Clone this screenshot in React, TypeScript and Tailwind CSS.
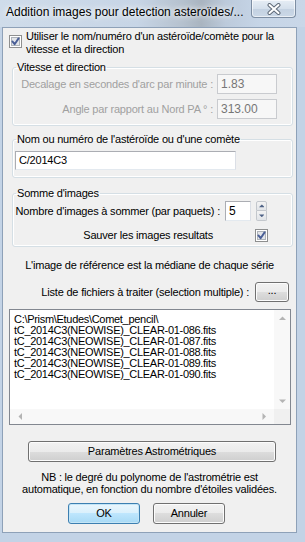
import React from "react";

const F = "font-['Liberation_Sans',Arial,sans-serif]";

function CheckBox() {
  return (
    <svg width="13" height="13" viewBox="0 0 13 13" className="block shrink-0">
      <rect x="0.5" y="0.5" width="12" height="12" fill="#ffffff" stroke="#8e8f8f" />
      <rect x="2.5" y="2.5" width="8" height="8" fill="#e3e5e9" stroke="#aeb3b9" />
      <path d="M3.4 6.4 L5.6 9.2 L9.6 3.4" stroke="#4a5f97" strokeWidth="1.9" fill="none" strokeLinecap="round" strokeLinejoin="round" />
    </svg>
  );
}

function Arrow({ dir, color = "#4d6185", size = 5 }: { dir: "up" | "down" | "left" | "right"; color?: string; size?: number }) {
  const p =
    dir === "up"
      ? "M0 4 L3.5 0.5 L7 4 Z"
      : dir === "down"
      ? "M0 0.5 L3.5 4 L7 0.5 Z"
      : dir === "left"
      ? "M4 0 L0.5 3.5 L4 7 Z"
      : "M0.5 0 L4 3.5 L0.5 7 Z";
  const w = dir === "up" || dir === "down" ? 7 : 4.5;
  const h = dir === "up" || dir === "down" ? 4.5 : 7;
  return (
    <svg width={w * (size / 5)} height={h * (size / 5)} viewBox={`0 0 ${w} ${h}`} className="block">
      <path d={p} fill={color} />
    </svg>
  );
}

const btn =
  "border border-[#707070] rounded-[3px] bg-[linear-gradient(to_bottom,#f2f2f2_0%,#ebebeb_50%,#dddddd_50%,#cfcfcf_100%)] shadow-[inset_0_0_0_1px_#fcfcfc] flex items-center justify-center text-black";

const groupCls = "border border-[#d5dfe5] rounded-[3px] shadow-[inset_0_0_0_1px_#ffffff] min-w-0";

export default function App() {
  return (
    <div className={`${F} w-[305px] h-[542px] flex flex-col bg-[#c3d3e6] overflow-hidden text-[11px] leading-[13px] tracking-[-0.2px] text-black`}>
      {/* Title bar */}
      <div className="h-[27px] flex items-start bg-[linear-gradient(90deg,#cfdcea_0%,#c7d5e6_45%,#b5c1ce_60%,#a9b4c0_66%,#bccadb_74%,#c6d5e7_85%,#c9d7e8_100%)]">
        <span className="pl-[6px] pt-[5px] text-[12px] leading-[15px] tracking-[0px] text-black [text-shadow:0_0_5px_#ffffff,0_0_8px_#ffffff] whitespace-nowrap">
          Addition images pour detection asteroïdes/...
        </span>
        <div className="ml-auto mr-[9px] w-[45px] h-[18px] rounded-b-[4px] border border-t-0 border-[#7d8ea3] bg-[linear-gradient(to_bottom,#e6edf5_0%,#d5e0ec_50%,#c3d1e1_51%,#cbd8e7_100%)] shadow-[inset_0_0_0_1px_rgba(255,255,255,0.6)] flex items-center justify-center">
          <svg width="16" height="12" viewBox="0 0 16 12">
            <path d="M3.5 2 L12.5 10 M12.5 2 L3.5 10" stroke="#5f6a78" strokeWidth="4" strokeLinecap="round" />
            <path d="M3.5 2 L12.5 10 M12.5 2 L3.5 10" stroke="#ffffff" strokeWidth="2" strokeLinecap="round" />
          </svg>
        </div>
      </div>

      {/* Client area */}
      <div className="ml-[2px] mr-[8px] h-[506px] border border-[#8ea1b8] bg-[#f0f0f0] flex flex-col">
        {/* checkbox row */}
        <div className="flex items-start pl-[6px] pt-[2px] h-[33px]">
          <div className="mt-[5px]">
            <CheckBox />
          </div>
          <div className="ml-[4px] leading-[13px]">
            Utiliser le nom/numéro d'un astéroïde/comète pour la
            <br />
            vitesse et la direction
          </div>
        </div>

        {/* Group 1 */}
        <fieldset className={`${groupCls} ml-[9px] w-[281px]`}>
          <legend className="ml-[3px] px-[1px] leading-[13px]">Vitesse et direction</legend>
          <div className="flex flex-col pr-[15px]">
            <div className="flex items-center justify-end">
              <span className="text-[#a0a0a0] mr-[4px] whitespace-nowrap">Decalage en secondes d'arc par minute :</span>
              <div className="w-[60px] h-[20px] border border-[#c9cbcf] bg-[#f7f7f7] text-[#767676] pl-[3px] flex items-center text-[12px] tracking-[0px]">1.83</div>
            </div>
            <div className="flex items-center justify-end mt-[5px] pb-[6px]">
              <span className="text-[#a0a0a0] mr-[4px] whitespace-nowrap">Angle par rapport au Nord PA ° :</span>
              <div className="w-[60px] h-[20px] border border-[#c9cbcf] bg-[#f7f7f7] text-[#767676] pl-[3px] flex items-center text-[12px] tracking-[0px]">313.00</div>
            </div>
          </div>
        </fieldset>

        {/* Group 2 */}
        <fieldset className={`${groupCls} ml-[9px] w-[281px] mt-[7px]`}>
          <legend className="ml-[3px] px-[1px] leading-[13px]">Nom ou numéro de l'astéroïde ou d'une comète</legend>
          <div className="pl-[2px] pt-[5px] pb-[7px]">
            <div className="w-[221px] h-[19px] border border-[#abadb3] border-r-[#dbdfe6] border-b-[#e3e9ef] bg-white pl-[3px] flex items-center text-[11px]">
              C/2014C3
            </div>
          </div>
        </fieldset>

        {/* Group 3 */}
        <fieldset className={`${groupCls} ml-[9px] w-[281px] mt-[9px]`}>
          <legend className="ml-[3px] px-[1px] leading-[13px]">Somme d'images</legend>
          <div className="flex flex-col pt-[1px] pr-[25px] pb-[4px]">
            <div className="flex items-center justify-end">
              <span className="whitespace-nowrap mr-[5px]">Nombre d'images à sommer (par paquets) :</span>
              <div className="w-[26px] h-[20px] border border-[#abadb3] border-r-[#dbdfe6] border-b-[#e3e9ef] bg-white pl-[3px] flex items-center text-[12px]">5</div>
              <div className="ml-[5px] w-[11px] h-[20px] flex flex-col">
                <div className="h-[10px] border border-[#c3c7cc] rounded-t-[2px] bg-[linear-gradient(to_bottom,#f3f3f3,#e1e4e8)] flex items-center justify-center">
                  <Arrow dir="up" size={4} />
                </div>
                <div className="h-[10px] border border-t-0 border-[#c3c7cc] rounded-b-[2px] bg-[linear-gradient(to_bottom,#f3f3f3,#e1e4e8)] flex items-center justify-center">
                  <Arrow dir="down" size={4} />
                </div>
              </div>
            </div>
            <div className="flex items-center justify-end mt-[8px]">
              <span className="whitespace-nowrap mr-[42px]">Sauver les images resultats</span>
              <div className="-mr-[1px]">
                <CheckBox />
              </div>
            </div>
          </div>
        </fieldset>

        <div className="mt-[12px] text-center whitespace-nowrap">L'image de référence est la médiane de chaque série</div>

        <div className="mt-[10px] flex items-center justify-end pr-[7px]">
          <span className="whitespace-nowrap mr-[6px]">Liste de fichiers à traiter (selection multiple) :</span>
          <div className={`${btn} w-[34px] h-[20px] leading-none pb-[4px]`}>...</div>
        </div>

        {/* List box */}
        <div className="mt-[7px] ml-[6px] w-[282px] h-[116px] border border-[#828790] bg-white flex flex-col">
          <div className="flex flex-1 min-h-0">
            <div className="flex-1 pl-[4px] pt-[4px] leading-[11px] tracking-[-0.3px] whitespace-nowrap overflow-hidden">
              <div>C:\Prism\Etudes\Comet_pencil\</div>
              <div>tC_2014C3(NEOWISE)_CLEAR-01-086.fits</div>
              <div>tC_2014C3(NEOWISE)_CLEAR-01-087.fits</div>
              <div>tC_2014C3(NEOWISE)_CLEAR-01-088.fits</div>
              <div>tC_2014C3(NEOWISE)_CLEAR-01-089.fits</div>
              <div>tC_2014C3(NEOWISE)_CLEAR-01-090.fits</div>
            </div>
            <div className="w-[16px] bg-[#f8f8f8] flex flex-col items-center justify-between py-[6px]">
              <Arrow dir="up" color="#b4b4b4" />
              <Arrow dir="down" color="#b4b4b4" />
            </div>
          </div>
          <div className="h-[15px] flex">
            <div className="flex-1 bg-[#f8f8f8] flex items-center justify-between px-[8px]">
              <Arrow dir="left" color="#b4b4b4" />
              <Arrow dir="right" color="#b4b4b4" />
            </div>
            <div className="w-[16px] bg-[#f0f0f0]" />
          </div>
        </div>

        <div className={`${btn} mt-[16px] ml-[25px] w-[248px] h-[21px]`}>Paramètres Astrométriques</div>

        <div className="mt-[9px] text-center leading-[12px] whitespace-nowrap">
          NB : le degré du polynome de l'astrométrie est
          <br />
          automatique, en fonction du nombre d'étoiles validées.
        </div>

        <div className="mt-[8px] flex ml-[65px] gap-[13px]">
          <div className="w-[72px] h-[21px] border border-[#3c7fb1] rounded-[3px] bg-[linear-gradient(to_bottom,#eaf6fd_0%,#d9f0fc_50%,#bee6fd_50%,#a7d9f5_100%)] shadow-[inset_0_0_0_1px_#c4e5f6] flex items-center justify-center">
            OK
          </div>
          <div className={`${btn} w-[72px] h-[21px]`}>Annuler</div>
        </div>
      </div>
    </div>
  );
}
